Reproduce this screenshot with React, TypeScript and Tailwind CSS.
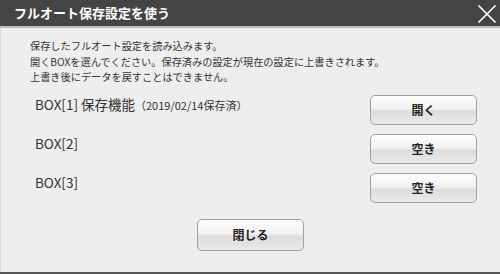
type Box = {
    label: string;
    note?: string;
    action: string;
};

const boxes: Box[] = [
    { label: 'BOX[1] 保存機能', note: '（2019/02/14保存済）', action: '開く' },
    { label: 'BOX[2]', action: '空き' },
    { label: 'BOX[3]', action: '空き' },
];

const font = { fontFamily: '"Noto Sans CJK JP", "Noto Sans", sans-serif' };

function GlossButton({ children, className = '' }: { children: React.ReactNode; className?: string }) {
    return (
        <button
            type="button"
            className={`w-[107px] shrink-0 rounded-[5px] border border-[#a0a0a0] bg-[linear-gradient(#fdfdfd_0%,#f2f2f2_45%,#dddddd_55%,#e9e9e9_100%)] text-[12px] font-bold text-[#222] shadow-[inset_0_1px_0_#fff] ${className}`}
        >
            {children}
        </button>
    );
}

export default function App() {
    return (
        <div className="flex h-[274px] w-[500px] flex-col bg-[#eeeeee]" style={font}>
            <div className="flex h-[28px] shrink-0 items-center justify-between border-b-2 border-[#bdbdbd] bg-[#444444] pl-[14px] pr-[3px]">
                <span className="text-[13px] font-bold text-white">フルオート保存設定を使う</span>
                <svg width="20" height="20" viewBox="0 0 20 20" className="mt-[2px]">
                    <path d="M1.5 1.5 L18.5 18.5 M18.5 1.5 L1.5 18.5" stroke="#fff" strokeWidth="1.7" fill="none" />
                </svg>
            </div>

            <div className="flex flex-1 flex-col border-l border-[#dadada] pl-[29px] pr-[23px] pt-[10px]">
                <div className="text-[10.2px] leading-[15.5px] text-[#333]">
                    <p>保存したフルオート設定を読み込みます。</p>
                    <p>開くBOXを選んでください。保存済みの設定が現在の設定に上書きされます。</p>
                    <p>上書き後にデータを戻すことはできません。</p>
                </div>

                <div className="mt-[10px] flex flex-col gap-[9px]">
                    {boxes.map(box => (
                        <div key={box.label} className="flex items-start justify-between">
                            <span className="pl-[5px] text-[13.5px] leading-[18px] text-[#333]">
                                {box.label}
                                {box.note && <span className="text-[11px]">{box.note}</span>}
                            </span>
                            <GlossButton className="h-[30px]">{box.action}</GlossButton>
                        </div>
                    ))}
                </div>

                <div className="mt-[16px] flex justify-center pr-[6px]">
                    <GlossButton className="h-[32px]">閉じる</GlossButton>
                </div>
            </div>

            <div className="h-[2px] shrink-0 bg-[#555555]" />
        </div>
    );
}
